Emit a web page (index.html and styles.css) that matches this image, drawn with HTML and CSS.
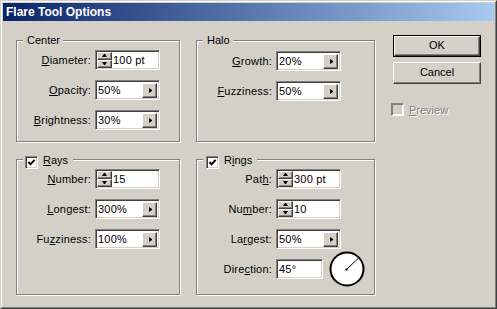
FILE: index.html
```html
<!DOCTYPE html>
<html lang="en">
<head>
    <meta charset="UTF-8">
    <title>Flare Tool Options</title>
    <link rel="stylesheet" href="styles.css">
</head>
<body>

    <div class="window">
        <div class="frame">
            <div class="titlebar">Flare Tool Options</div>

            <div class="content">
                <div class="col col-left">
                    <div class="group group-top">
                        <div class="legend">Center</div>
                        <div class="rows">
                            <div class="row">
                                <span class="lbl"><u>D</u>iameter:</span>
                                <div class="field">
                                    <span class="spin"><span class="sb"><i class="up"></i></span><span class="sb"><i class="down"></i></span></span>
                                    <span class="val">100 pt</span>
                                </div>
                            </div>
                            <div class="row">
                                <span class="lbl"><u>O</u>pacity:</span>
                                <div class="field">
                                    <span class="val">50%</span>
                                    <span class="pop"><i class="right"></i></span>
                                </div>
                            </div>
                            <div class="row">
                                <span class="lbl"><u>B</u>rightness:</span>
                                <div class="field">
                                    <span class="val">30%</span>
                                    <span class="pop"><i class="right"></i></span>
                                </div>
                            </div>
                        </div>
                    </div>

                    <div class="group group-bottom">
                        <div class="legend legend-check">
                            <span class="check"><svg width="9" height="9" viewBox="0 0 9 9"><polyline points="1.5,4 3.5,6.3 7.6,1.8" fill="none" stroke="#000" stroke-width="2"/></svg></span>
                            <span class="legend-text"><u>R</u>ays</span>
                        </div>
                        <div class="rows">
                            <div class="row">
                                <span class="lbl"><u>N</u>umber:</span>
                                <div class="field">
                                    <span class="spin"><span class="sb"><i class="up"></i></span><span class="sb"><i class="down"></i></span></span>
                                    <span class="val">15</span>
                                </div>
                            </div>
                            <div class="row">
                                <span class="lbl"><u>L</u>ongest:</span>
                                <div class="field">
                                    <span class="val">300%</span>
                                    <span class="pop"><i class="right"></i></span>
                                </div>
                            </div>
                            <div class="row">
                                <span class="lbl">Fu<u>z</u>ziness:</span>
                                <div class="field">
                                    <span class="val">100%</span>
                                    <span class="pop"><i class="right"></i></span>
                                </div>
                            </div>
                        </div>
                    </div>
                </div>

                <div class="col col-mid">
                    <div class="group group-top">
                        <div class="legend">Halo</div>
                        <div class="rows rows-halo">
                            <div class="row">
                                <span class="lbl"><u>G</u>rowth:</span>
                                <div class="field">
                                    <span class="val">20%</span>
                                    <span class="pop"><i class="right"></i></span>
                                </div>
                            </div>
                            <div class="row">
                                <span class="lbl"><u>F</u>uzziness:</span>
                                <div class="field">
                                    <span class="val">50%</span>
                                    <span class="pop"><i class="right"></i></span>
                                </div>
                            </div>
                        </div>
                    </div>

                    <div class="group group-bottom">
                        <div class="legend legend-check">
                            <span class="check"><svg width="9" height="9" viewBox="0 0 9 9"><polyline points="1.5,4 3.5,6.3 7.6,1.8" fill="none" stroke="#000" stroke-width="2"/></svg></span>
                            <span class="legend-text">R<u>i</u>ngs</span>
                        </div>
                        <div class="rows">
                            <div class="row">
                                <span class="lbl">Pat<u>h</u>:</span>
                                <div class="field">
                                    <span class="spin"><span class="sb"><i class="up"></i></span><span class="sb"><i class="down"></i></span></span>
                                    <span class="val">300 pt</span>
                                </div>
                            </div>
                            <div class="row">
                                <span class="lbl">Nu<u>m</u>ber:</span>
                                <div class="field">
                                    <span class="spin"><span class="sb"><i class="up"></i></span><span class="sb"><i class="down"></i></span></span>
                                    <span class="val">10</span>
                                </div>
                            </div>
                            <div class="row">
                                <span class="lbl">La<u>r</u>gest:</span>
                                <div class="field">
                                    <span class="val">50%</span>
                                    <span class="pop"><i class="right"></i></span>
                                </div>
                            </div>
                            <div class="row">
                                <span class="lbl">Dire<u>c</u>tion:</span>
                                <div class="field field-short">
                                    <span class="val">45°</span>
                                </div>
                                <svg class="dial" width="36" height="36" viewBox="0 0 36 36">
                                    <circle cx="18" cy="18" r="16.5" fill="#fff" stroke="#000" stroke-width="2"/>
                                    <line x1="17.5" y1="18.5" x2="29" y2="7.5" stroke="#000" stroke-width="1"/>
                                    <rect x="16.5" y="17.5" width="2" height="2" fill="#000"/>
                                </svg>
                            </div>
                        </div>
                    </div>
                </div>

                <div class="col col-buttons">
                    <div class="btn btn-default"><span>OK</span></div>
                    <div class="btn">Cancel</div>
                    <div class="preview">
                        <span class="check check-off"></span>
                        <span class="disabled"><u>P</u>review</span>
                    </div>
                </div>
            </div>
        </div>
    </div>

</body>
</html>
```

FILE: styles.css
```css
html, body {
    margin: 0;
    padding: 0;
}

body {
    width: 497px;
    height: 309px;
    overflow: hidden;
    background: #d4d0c8;
    color: #000;
    font-family: "Liberation Sans", Arial, sans-serif;
    font-size: 11px;
}

.window {
    box-sizing: border-box;
    width: 497px;
    height: 309px;
    border: 1px solid;
    border-color: #d4d0c8 #404040 #404040 #d4d0c8;
}

.frame {
    box-sizing: border-box;
    height: 100%;
    border: 1px solid;
    border-color: #fff #808080 #808080 #fff;
    padding: 1px;
}

.titlebar {
    height: 18px;
    line-height: 18px;
    padding-left: 3px;
    color: #fff;
    font-weight: bold;
    font-size: 12px;
    background: linear-gradient(to right, #0a246a, #a6caf0);
}

.content {
    display: flex;
    padding: 14px 0 0 13px;
}

.col {
    display: flex;
    flex-direction: column;
}

.col-left {
    width: 164px;
    margin-top: 5px;
}

.col-mid {
    width: 179px;
    margin-top: 5px;
    margin-left: 16px;
}

.col-buttons {
    width: 88px;
    margin-left: 18px;
}

/* etched group boxes */
.group {
    position: relative;
    box-sizing: border-box;
    border: 1px solid #808080;
    box-shadow: inset 1px 1px 0 #fff, 1px 1px 0 #fff;
}

.group-top {
    height: 102px;
}

.group-bottom {
    height: 136px;
    margin-top: 17px;
}

.legend {
    position: absolute;
    top: -7px;
    left: 6px;
    padding: 0 3px 0 4px;
    line-height: 13px;
    background: #d4d0c8;
}

.legend-check {
    display: flex;
    align-items: flex-start;
    top: -4px;
    padding-left: 2px;
    padding-right: 5px;
}

.col-mid .legend-check {
    padding-left: 3px;
}

.legend-text {
    margin-left: 5px;
    margin-top: -2px;
}

.rows {
    display: flex;
    flex-direction: column;
    gap: 10px;
    padding-top: 9px;
}

.rows-halo {
    padding-top: 10px;
}

.row {
    display: flex;
    align-items: center;
    height: 20px;
}

.lbl {
    text-align: right;
    width: 74px;
    margin-right: 4px;
    letter-spacing: 0.2px;
}

.col-mid .lbl {
    width: 75px;
}

/* sunken edit field */
.field {
    box-sizing: border-box;
    display: flex;
    align-items: center;
    width: 65px;
    height: 20px;
    border: 1px solid;
    border-color: #808080 #fff #fff #808080;
    box-shadow: inset 1px 1px 0 #404040, inset -1px -1px 0 #d4d0c8;
    background: #fff;
    padding: 1px;
}

.field-short {
    width: 47px;
}

.val {
    flex: 1;
    padding-left: 1px;
    line-height: 16px;
    letter-spacing: 0.2px;
}

.spin {
    display: flex;
    flex-direction: column;
    width: 15px;
    height: 16px;
}

.sb,
.pop {
    box-sizing: border-box;
    display: flex;
    align-items: center;
    justify-content: center;
    background: #d4d0c8;
    border: 1px solid;
    border-color: #fff #404040 #404040 #fff;
    box-shadow: inset -1px -1px 0 #808080;
}

.sb {
    height: 8px;
}

.pop {
    width: 15px;
    height: 15px;
    margin-right: 1px;
}

.up,
.down,
.right {
    display: block;
    width: 0;
    height: 0;
}

.up {
    width: 1px;
    border-left: 2px solid transparent;
    border-right: 2px solid transparent;
    border-bottom: 3px solid #000;
    margin-top: -1px;
}

.down {
    width: 1px;
    border-left: 2px solid transparent;
    border-right: 2px solid transparent;
    border-top: 3px solid #000;
    margin-top: -1px;
}

.right {
    height: 1px;
    border-top: 2px solid transparent;
    border-bottom: 2px solid transparent;
    border-left: 3px solid #000;
    margin-right: -1px;
}

.dial {
    margin-left: 6px;
}

/* checkboxes */
.check {
    box-sizing: border-box;
    display: flex;
    align-items: center;
    justify-content: center;
    width: 13px;
    height: 13px;
    border: 1px solid;
    border-color: #808080 #fff #fff #808080;
    box-shadow: inset 1px 1px 0 #404040, inset -1px -1px 0 #d4d0c8;
    background: #fff;
}

.check-off {
    background: #d4d0c8;
    box-shadow: inset 1px 1px 0 #808080, inset -1px -1px 0 #fff;
    border-color: #808080 #fff #fff #808080;
}

/* push buttons */
.btn {
    box-sizing: border-box;
    height: 22px;
    line-height: 18px;
    text-align: center;
    border: 1px solid;
    border-color: #fff #404040 #404040 #fff;
    box-shadow: inset -1px -1px 0 #808080;
}

.btn-default {
    border: 1px solid #000;
    box-shadow: none;
    line-height: normal;
}

.btn-default span {
    box-sizing: border-box;
    display: block;
    height: 20px;
    line-height: 16px;
    border: 1px solid;
    border-color: #fff #404040 #404040 #fff;
    box-shadow: inset -1px -1px 0 #808080;
}

.btn + .btn {
    margin-top: 5px;
}

.preview {
    display: flex;
    align-items: center;
    margin: 19px 0 0 -2px;
}

.disabled {
    margin-left: 5px;
    color: #808080;
    text-shadow: 1px 1px 0 #fff;
}
```
